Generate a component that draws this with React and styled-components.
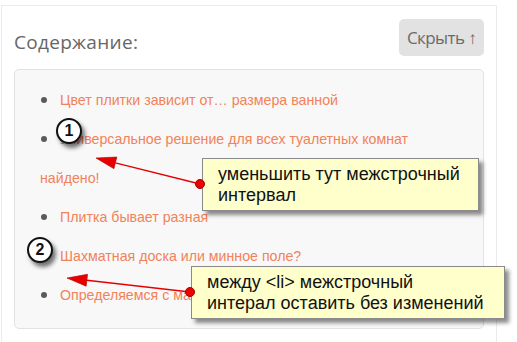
import React from 'react';
import styled, { createGlobalStyle } from 'styled-components';

const GlobalStyle = createGlobalStyle`
  html, body {
    margin: 0;
    padding: 0;
    background: #fff;
  }
`;

const Page = styled.div`
  position: relative;
  width: 517px;
  height: 342px;
  overflow: hidden;
`;

const Outer = styled.div`
  margin: 5px 0 0 1px;
  width: 494px;
  border: 1px solid #ebebeb;
  border-bottom: none;
  padding-bottom: 30px;
`;

const Header = styled.div`
  display: flex;
  justify-content: space-between;
  align-items: flex-start;
  padding: 13px 12px 0 12px;
`;

const Title = styled.h2`
  margin: 10px 0 0;
  font-family: 'Open Sans', sans-serif;
  font-weight: 400;
  font-size: 19px;
  line-height: 26px;
  color: #666;
  letter-spacing: 0.3px;
`;

const HideButton = styled.button`
  width: 85px;
  height: 37px;
  border: none;
  border-radius: 5px;
  background: #e2e2e2;
  color: #6a6a6a;
  font-family: 'Open Sans', sans-serif;
  font-size: 17px;
  letter-spacing: -0.6px;
  padding: 0;
  cursor: pointer;
`;

const Contents = styled.div`
  margin: 13px 12px 0 12px;
  background: #f8f8f8;
  border: 1px solid #e2e2e2;
  border-radius: 5px;
  padding: 11px 30px 13px 25px;
`;

const List = styled.ul`
  list-style: none;
  margin: 0;
  padding: 0;
`;

const Item = styled.li`
  font-family: 'Liberation Sans', Arial, sans-serif;
  font-size: 14.2px;
  line-height: 39px;
  color: #f2825a;

  &::before {
    content: '';
    display: inline-block;
    width: 6px;
    height: 6px;
    border-radius: 50%;
    background: #5a5a5a;
    margin: 0 13px 0 1px;
    vertical-align: 2px;
  }
`;

const Note = styled.div`
  position: absolute;
  left: ${(p) => p.$x}px;
  top: ${(p) => p.$y}px;
  width: ${(p) => p.$w}px;
  height: 53px;
  box-sizing: border-box;
  padding: 5px 0 0 15px;
  background: #ffffcc;
  border: 1px solid #8a8a8a;
  box-shadow: 4px 4px 4px rgba(0, 0, 0, 0.45);
  font-family: 'Liberation Sans', Arial, sans-serif;
  font-size: 18px;
  line-height: 21px;
  color: #111;
`;

const Badge = styled.div`
  position: absolute;
  left: ${(p) => p.$x - 13}px;
  top: ${(p) => p.$y - 13}px;
  width: 22px;
  height: 22px;
  border: 2px solid #111;
  border-radius: 50%;
  background: #fff;
  box-shadow: 3px 4px 4px rgba(0, 0, 0, 0.55);
  display: flex;
  align-items: center;
  justify-content: center;
  font-family: 'Liberation Sans', Arial, sans-serif;
  font-weight: 700;
  font-size: 16px;
  color: #111;
`;

const Arrows = styled.svg`
  position: absolute;
  left: 0;
  top: 0;
  pointer-events: none;
`;

const Arrow = ({ x1, y1, x2, y2 }) => {
  const a = Math.atan2(y1 - y2, x1 - x2);
  const len = 20;
  const half = 6;
  const bx = x2 + Math.cos(a) * len;
  const by = y2 + Math.sin(a) * len;
  const px = -Math.sin(a) * half;
  const py = Math.cos(a) * half;
  return (
    <g>
      <line x1={x1} y1={y1} x2={bx} y2={by} stroke="#e60000" strokeWidth="1.3" />
      <polygon
        points={`${x2},${y2} ${bx + px},${by + py} ${bx - px},${by - py}`}
        fill="#e60000"
        stroke="#b00000"
        strokeWidth="0.6"
      />
      <circle cx={x1} cy={y1} r="4.5" fill="#ee0000" stroke="#a00000" strokeWidth="1" />
    </g>
  );
};

const items = [
  'Цвет плитки зависит от… размера ванной',
  'Универсальное решение для всех туалетных комнат найдено!',
  'Плитка бывает разная',
  'Шахматная доска или минное поле?',
  'Определяемся с материалом',
];

export default function App() {
  return (
    <Page>
      <GlobalStyle />
      <Outer>
        <Header>
          <Title>Содержание:</Title>
          <HideButton>Скрыть ↑</HideButton>
        </Header>
        <Contents>
          <List>
            {items.map((t) => (
              <Item key={t}>{t}</Item>
            ))}
          </List>
        </Contents>
      </Outer>

      <Badge $x={69} $y={131}>1</Badge>
      <Badge $x={40} $y={250}>2</Badge>

      <Note $x={202} $y={158} $w={277}>
        уменьшить тут межстрочный
        <br />
        интервал
      </Note>
      <Note $x={191} $y={266} $w={314}>
        между &lt;li&gt; межстрочный
        <br />
        интерал оставить без изменений
      </Note>

      <Arrows width="517" height="342">
        <Arrow x1={200} y1={184} x2={96} y2={158} />
        <Arrow x1={190} y1={292} x2={67} y2={278} />
      </Arrows>
    </Page>
  );
}
